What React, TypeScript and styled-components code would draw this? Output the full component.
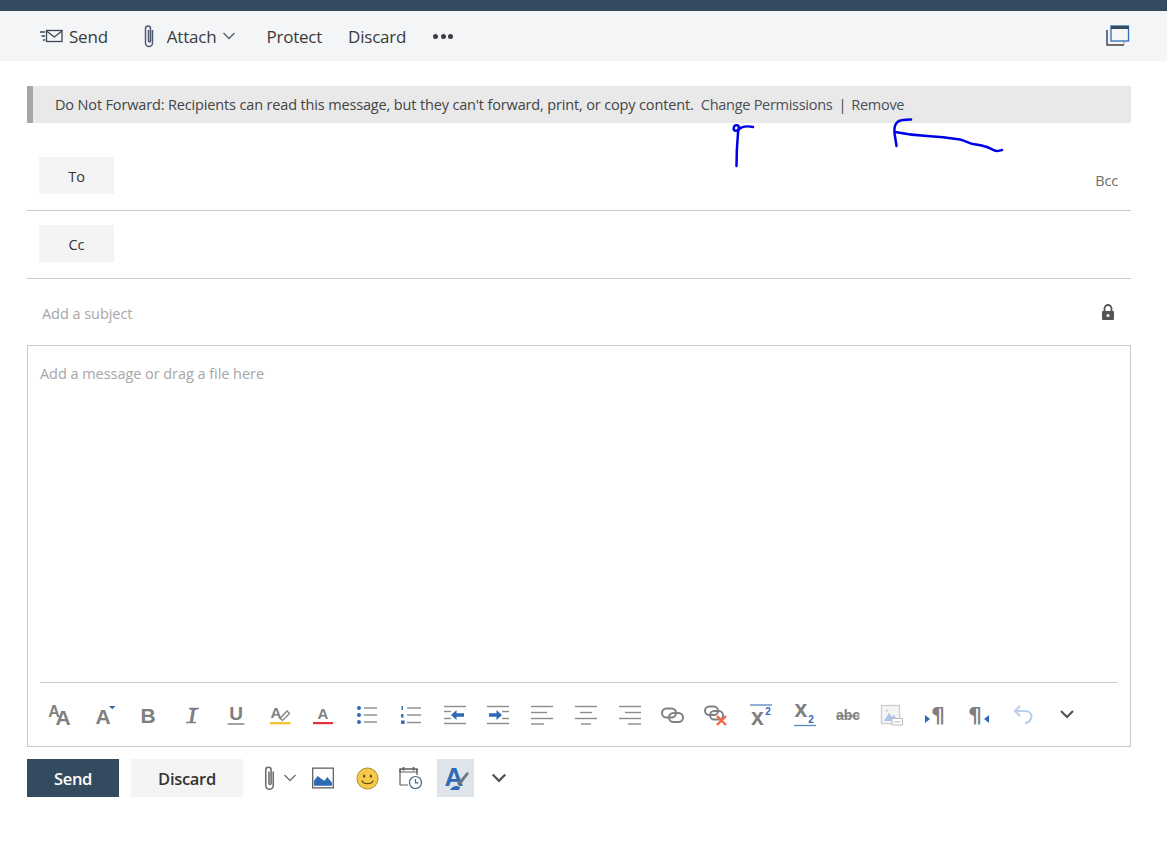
import * as React from "react";
import styled, { createGlobalStyle } from "styled-components";

const GlobalStyle = createGlobalStyle`
  html, body { margin: 0; padding: 0; background: #fff; }
  body { font-family: "Open Sans", "Noto Sans", "Liberation Sans", sans-serif; color: #333; }
`;

const Page = styled.div`
  position: relative;
  width: 1167px;
  height: 849px;
  overflow: hidden;
  display: flex;
  flex-direction: column;
`;

const TopStrip = styled.div`
  height: 11px;
  background: #344a5f;
  flex: none;
`;

const CommandBar = styled.div`
  height: 50px;
  flex: none;
  background: #f4f5f7;
  display: flex;
  align-items: center;
  padding: 0 37px 0 39px;
  color: #3a3a3a;
  font-size: 17px;
`;

const CommandItem = styled.div<{ $gap?: number; $after?: number; $before?: number }>`
  display: flex;
  align-items: center;
  gap: ${(p) => p.$gap ?? 0}px;
  margin-left: ${(p) => p.$before ?? 0}px;
  margin-right: ${(p) => p.$after ?? 0}px;
  letter-spacing: -0.22px;
`;

const Dots = styled.div`
  display: flex;
  gap: 2.6px;
  margin-left: 1px;
  i {
    width: 5px;
    height: 5px;
    border-radius: 50%;
    background: #3c3c46;
  }
`;

const Spacer = styled.div`
  flex: 1;
`;

const Content = styled.div`
  padding: 25px 36px 0 27px;
  display: flex;
  flex-direction: column;
`;

const Notice = styled.div`
  height: 37px;
  box-sizing: border-box;
  background: #e9e9e9;
  border-left: 6px solid #a6a6a6;
  padding-left: 22px;
  display: flex;
  align-items: center;
  font-size: 14.5px;
  letter-spacing: -0.15px;
  color: #444;
  white-space: pre;
`;

const NoticeLink = styled.span`
  color: #4a4f57;
  letter-spacing: -0.28px;
`;

const NoticeDivider = styled.span`
  margin: 0 5px 0 6px;
  color: #444;
`;

const RecipientRow = styled.div<{ $height: number; $top: number }>`
  height: ${(p) => p.$height}px;
  box-sizing: border-box;
  border-bottom: 1px solid #c8c8c8;
  padding: ${(p) => p.$top}px 0 0 12px;
  display: flex;
  align-items: flex-start;
  justify-content: space-between;
`;

const RecipientButton = styled.div`
  width: 75px;
  height: 37px;
  box-sizing: border-box;
  padding-top: 1px;
  background: #f4f4f4;
  color: #333;
  font-size: 14.5px;
  display: flex;
  align-items: center;
  justify-content: center;
`;

const BccLabel = styled.div`
  font-size: 14.5px;
  color: #6d6d6d;
  margin: 14px 13px 0 0;
  letter-spacing: -0.2px;
`;

const SubjectRow = styled.div`
  height: 66px;
  box-sizing: border-box;
  display: flex;
  align-items: center;
  justify-content: space-between;
  padding: 3px 15px 0 15px;
  font-size: 14.5px;
  color: #a6a6a6;
  letter-spacing: -0.05px;
  svg {
    margin-bottom: 3px;
  }
`;

const Editor = styled.div`
  height: 402px;
  box-sizing: border-box;
  border: 1px solid #c8c8c8;
  padding: 0 13px 0 12px;
  display: flex;
  flex-direction: column;
`;

const Placeholder = styled.div`
  flex: 1;
  padding-top: 18px;
  font-size: 14.5px;
  color: #a6a6a6;
  letter-spacing: -0.05px;
`;

const FormatBar = styled.div`
  height: 64px;
  flex: none;
  box-sizing: border-box;
  border-top: 1px solid #c8c8c8;
  display: grid;
  grid-template-columns: repeat(24, 43.75px);
  align-items: center;
`;

const FormatCell = styled.div`
  display: flex;
  justify-content: center;
  align-items: center;
  height: 63px;
  margin-left: -2px;
  svg {
    display: block;
    overflow: visible;
  }
`;

const Footer = styled.div`
  display: flex;
  align-items: center;
  margin-top: 12px;
  height: 38px;
`;

const PrimaryButton = styled.div`
  width: 92px;
  height: 38px;
  box-sizing: border-box;
  padding-top: 1px;
  background: #344a5f;
  color: #fff;
  font-weight: 600;
  font-size: 16.5px;
  letter-spacing: -0.3px;
  display: flex;
  align-items: center;
  justify-content: center;
  margin-right: 12px;
`;

const SecondaryButton = styled.div`
  width: 112px;
  height: 38px;
  box-sizing: border-box;
  padding-top: 1px;
  background: #f4f4f4;
  color: #333;
  font-weight: 600;
  font-size: 16.5px;
  letter-spacing: -0.3px;
  display: flex;
  align-items: center;
  justify-content: center;
  margin-right: 17px;
`;

const FooterIcon = styled.div<{ $width: number; $active?: boolean }>`
  width: ${(p) => p.$width}px;
  margin-left: ${(p) => (p.$active ? 5 : 0)}px;
  height: 38px;
  display: flex;
  align-items: center;
  justify-content: center;
  background: ${(p) => (p.$active ? "#dfe3ea" : "transparent")};
  svg {
    overflow: visible;
  }
`;

const Scribble = styled.svg`
  position: absolute;
  left: 0;
  top: 0;
  pointer-events: none;
`;

const grey = "#7f7f7f";
const blue = "#2f6ab5";
const FONT = '"Liberation Sans", sans-serif';

type GlyphProps = { size: number; x: number; y: number; weight?: string; style?: string; fill?: string; family?: string; children: string };
const Glyph = ({ size, x, y, weight = "normal", style = "normal", fill = grey, family = FONT, children }: GlyphProps) => (
  <text x={x} y={y} fontSize={size} fontWeight={weight} fontStyle={style} fill={fill} fontFamily={family} textAnchor="middle">
    {children}
  </text>
);

const Icon = ({ children }: { children: React.ReactNode }) => (
  <svg width="26" height="26" viewBox="0 0 26 26">
    {children}
  </svg>
);

const Lines = ({ rows }: { rows: [number, number, number][] }) => (
  <g stroke="#8c8c8c" strokeWidth="1.4">
    {rows.map(([x1, x2, y], i) => (
      <line key={i} x1={x1} x2={x2} y1={y} y2={y} />
    ))}
  </g>
);

const formatIcons: React.ReactNode[] = [
  <Icon><Glyph size={16} x={6} y={15} weight="bold">A</Glyph><Glyph size={21} x={15} y={23} weight="bold">A</Glyph></Icon>,
  <Icon><Glyph size={21} x={11} y={22} weight="bold">A</Glyph><path d="M17 4h6.500l-3.200 3.200z" fill={blue} /></Icon>,
  <Icon><Glyph size={21} x={13} y={21} weight="bold">B</Glyph></Icon>,
  <Icon><Glyph size={21} x={13} y={21} style="italic" family='"Liberation Serif", serif' weight="bold">I</Glyph><path d="M7 20.500h10M10 6.500h10" stroke={grey} strokeWidth="1.400" /></Icon>,
  <Icon><Glyph size={19} x={13} y={18} weight="bold">U</Glyph><path d="M4.500 22h17" stroke={grey} strokeWidth="1.400" /></Icon>,
  <Icon><Glyph size={15} x={9} y={16} weight="bold">A</Glyph><path d="M13 16.500l7-7.500 2.500 2.500-7 7z" fill="none" stroke={grey} strokeWidth="1.300" /><rect x="3" y="20" width="20.500" height="2.400" fill="#f5c33b" /></Icon>,
  <Icon><Glyph size={15} x={13} y={17} weight="bold">A</Glyph><rect x="3" y="20" width="20" height="2.200" fill="#e8313a" /></Icon>,
  <Icon><g fill={blue}><circle cx="5" cy="6" r="2" /><circle cx="5" cy="13" r="2" /><circle cx="5" cy="20" r="2" /></g><Lines rows={[[10, 23, 6], [10, 23, 13], [10, 23, 20]]} /></Icon>,
  <Icon><g fill={blue}><rect x="3.500" y="4" width="1.400" height="4" /><path d="M3 12h2.400v1.400l-1 1h1.600v1.200H3z" /><rect x="3" y="18.500" width="3.600" height="3.400" /></g><Lines rows={[[9, 23, 6], [9, 23, 13], [9, 23, 20.500]]} /></Icon>,
  <Icon><Lines rows={[[2, 24, 4.500], [2, 9, 9.500], [2, 9, 16.500], [2, 24, 21.500]]} /><path d="M9 13l5.500-5v3.200H22v3.600h-7.500V18z" fill={blue} /></Icon>,
  <Icon><Lines rows={[[2, 24, 4.500], [17, 24, 9.500], [17, 24, 16.500], [2, 24, 21.500]]} /><path d="M17 13l-5.500-5v3.200H4v3.600h7.500V18z" fill={blue} /></Icon>,
  <Icon><Lines rows={[[2, 24, 4.500], [2, 18, 10.500], [2, 24, 16.500], [2, 15, 22]]} /></Icon>,
  <Icon><Lines rows={[[2, 24, 4.500], [7, 19, 10.500], [2, 24, 16.500], [8, 18, 22]]} /></Icon>,
  <Icon><Lines rows={[[2, 24, 4.500], [8, 24, 10.500], [2, 24, 16.500], [11, 24, 22]]} /></Icon>,
  <Icon><g fill="none" stroke="#808080" strokeWidth="2"><rect x="2" y="6.500" width="14" height="9" rx="4.500" /><rect x="9" y="11" width="14" height="9" rx="4.500" /></g></Icon>,
  <Icon><g fill="none" stroke="#808080" strokeWidth="2"><rect x="1" y="4.500" width="13" height="8.500" rx="4.200" /><rect x="6" y="9" width="13" height="8.500" rx="4.200" /></g><path d="M13 14l9 9M22 14l-9 9" stroke="#ef6a43" strokeWidth="2.400" /></Icon>,
  <Icon><path d="M2 3h22" stroke={blue} strokeWidth="1.300" opacity=".8" /><Glyph size={23} x={9.500} y={23} weight="bold">x</Glyph><Glyph size={10} x={20} y={13} weight="bold" fill={blue}>2</Glyph></Icon>,
  <Icon><Glyph size={23} x={9} y={15} weight="bold">x</Glyph><Glyph size={10} x={19} y={21} weight="bold" fill={blue}>2</Glyph><path d="M2 23.500h22" stroke={blue} strokeWidth="1.300" opacity=".8" /></Icon>,
  <Icon><Glyph size={14} x={13} y={18} weight="bold">abc</Glyph><path d="M1.500 14h23" stroke={grey} strokeWidth="1.300" /></Icon>,
  <Icon><rect x="2.500" y="3.500" width="18" height="18" fill="#f4f4f4" stroke="#cfcfcf" strokeWidth="1.400" /><path d="M5 19l5-8 3 4 2-2 4 6z" fill="#a9c4e6" /><circle cx="8" cy="8.500" r="1.600" fill="#cfdff2" /><rect x="13" y="16.500" width="10.500" height="6.500" fill="#fff" stroke="#bdbdbd" /><path d="M15 20h6.500" stroke="#bdbdbd" /></Icon>,
  <Icon><path d="M2 13l5 4-5 4z" fill={blue} /><Glyph size={22} x={15} y={21} weight="bold" family='"DejaVu Sans", sans-serif'>¶</Glyph></Icon>,
  <Icon><Glyph size={22} x={8} y={21} weight="bold" family='"DejaVu Sans", sans-serif'>¶</Glyph><path d="M22 13l-5 4 5 4z" fill={blue} /></Icon>,
  <Icon><path d="M10 4L5 9l5 5M5 9h10c4.500 0 6.500 3 6.500 5.500S19 21 15 21" fill="none" stroke="#b9cfeb" strokeWidth="2.200" /></Icon>,
  <Icon><path d="M7 9l6 6 6-6" fill="none" stroke="#54504c" strokeWidth="2" /></Icon>,
];

const PaperClip = ({ color, w, h, stroke = 1.3 }: { color: string; w: number; h: number; stroke?: number }) => (
  <svg width={w} height={h} viewBox="0 0 14 24">
    <path d="M10.500 6v13a3.500 3.500 0 0 1-7 0V4.500a2.500 2.500 0 0 1 5 0V17a1 1 0 0 1-2 0V6" fill="none" stroke={color} strokeWidth={stroke} />
  </svg>
);

const Chevron = ({ size, color, width }: { size: number; color: string; width: number }) => (
  <svg width={size} height={size} viewBox="0 0 14 14">
    <path d="M1.500 4l5.500 5.500L12.500 4" fill="none" stroke={color} strokeWidth={width} />
  </svg>
);

const App = () => (
  <Page>
    <GlobalStyle />
    <TopStrip />
    <CommandBar>
      <CommandItem $gap={3} $after={34}>
        <svg width="27" height="15" viewBox="0 0 27 15">
          <path d="M1 3h5M2.500 7h3.500M4 11h2" stroke="#3c4650" strokeWidth="1.300" />
          <rect x="7.500" y="1.500" width="15.500" height="11" fill="none" stroke="#3c4650" strokeWidth="1.300" />
          <path d="M7.500 2l7.800 6 7.700-6" fill="none" stroke="#3c4650" strokeWidth="1.300" />
        </svg>
        Send
      </CommandItem>
      <CommandItem $gap={11}>
        <PaperClip color="#4f5d73" w={14} h={24} stroke={1.5} />
        Attach
      </CommandItem>
      <CommandItem $before={6} $after={30}>
        <Chevron size={14} color="#5a6570" width={1.5} />
      </CommandItem>
      <CommandItem $after={26}>Protect</CommandItem>
      <CommandItem $after={26}>Discard</CommandItem>
      <Dots><i /><i /><i /></Dots>
      <Spacer />
      <svg width="24" height="22" viewBox="0 0 24 22">
        <path d="M1 5v15h17" fill="none" stroke="#344a5f" strokeWidth="1.500" />
        <path d="M1 19.500h17V17" fill="none" stroke="#8a5a3c" strokeWidth=".7" />
        <rect x="5" y="1" width="17.500" height="15" fill="none" stroke="#2f6ab5" strokeWidth="1.300" />
        <rect x="5" y="1" width="17.500" height="3" fill="#344a5f" />
      </svg>
    </CommandBar>
    <Content>
      <Notice>
        Do Not Forward: Recipients can read this message, but they can't forward, print, or copy content.{"  "}
        <NoticeLink>Change Permissions</NoticeLink>
        <NoticeDivider>|</NoticeDivider>
        <NoticeLink>Remove</NoticeLink>
      </Notice>
      <RecipientRow $height={88} $top={34}>
        <RecipientButton>To</RecipientButton>
        <BccLabel>Bcc</BccLabel>
      </RecipientRow>
      <RecipientRow $height={68} $top={14}>
        <RecipientButton>Cc</RecipientButton>
      </RecipientRow>
      <SubjectRow>
        Add a subject
        <svg width="16" height="18" viewBox="0 0 16 18">
          <path d="M4.500 8V5.500a3.500 3.500 0 0 1 7 0V8" fill="none" stroke="#555" strokeWidth="1.800" />
          <rect x="2" y="8" width="12" height="9" rx="1" fill="#555" />
          <circle cx="8" cy="12.500" r="1.500" fill="#fff" />
        </svg>
      </SubjectRow>
      <Editor>
        <Placeholder>Add a message or drag a file here</Placeholder>
        <FormatBar>
          {formatIcons.map((icon, i) => (
            <FormatCell key={i}>{icon}</FormatCell>
          ))}
        </FormatBar>
      </Editor>
      <Footer>
        <PrimaryButton>Send</PrimaryButton>
        <SecondaryButton>Discard</SecondaryButton>
        <FooterIcon $width={18}>
          <PaperClip color="#6f6f6f" w={15} h={26} stroke={1.5} />
        </FooterIcon>
        <FooterIcon $width={24}>
          <Chevron size={14} color="#6f6f6f" width={1.3} />
        </FooterIcon>
        <FooterIcon $width={42}>
          <svg width="22" height="22" viewBox="0 0 23 22">
            <rect x=".7" y=".7" width="21.600" height="20.600" fill="#fff" stroke="#666" strokeWidth="1.400" />
            <path d="M2 19V14l4-5 4 3 3 2 3-4 5 6v3z" fill="#2f6ab5" />
          </svg>
        </FooterIcon>
        <FooterIcon $width={46}>
          <svg width="23" height="23" viewBox="0 0 24 24">
            <circle cx="12" cy="12" r="11" fill="#f7c948" stroke="#a8892b" strokeWidth="1" />
            <ellipse cx="8.500" cy="9.500" rx="1.200" ry="1.700" fill="#5a4a1a" />
            <ellipse cx="15.500" cy="9.500" rx="1.200" ry="1.700" fill="#5a4a1a" />
            <path d="M6 14c2 4.500 10 4.500 12 0" fill="none" stroke="#5a4a1a" strokeWidth="1.200" />
          </svg>
        </FooterIcon>
        <FooterIcon $width={42}>
          <svg width="24" height="24" viewBox="0 0 24 24">
            <path d="M1 15V3h17v6" fill="none" stroke="#5c5c5c" strokeWidth="1.200" />
            <path d="M1 3h17v3H1zM1 19h8" fill="none" stroke="#5c5c5c" strokeWidth="1.200" />
            <path d="M1 15v4" stroke="#5c5c5c" strokeWidth="1.200" />
            <path d="M4.500 1v3.500M14.500 1v3.500" stroke="#5c5c5c" strokeWidth="1.600" />
            <circle cx="16.500" cy="16.500" r="6" fill="#fff" stroke="#4d6680" strokeWidth="1.200" />
            <path d="M16.500 13v3.800h3" fill="none" stroke="#4d6680" strokeWidth="1.200" />
          </svg>
        </FooterIcon>
        <FooterIcon $width={37} $active>
          <svg width="28" height="28" viewBox="0 0 28 28">
            <text x="12" y="22" fontSize="26" fontWeight="bold" fill="#2f6ab5" fontFamily={FONT} textAnchor="middle">A</text>
            <path d="M15 20L25 8l2 1.500-9 12z" fill="#6b7480" />
            <path d="M8 26c2-4 7-5 10-3l-1 3z" fill="#2f6ab5" />
          </svg>
        </FooterIcon>
        <FooterIcon $width={50}>
          <Chevron size={16} color="#54504c" width={1.9} />
        </FooterIcon>
      </Footer>
    </Content>
    <Scribble width="1167" height="849" viewBox="0 0 1167 849">
      <g fill="none" stroke="#0000e6" strokeWidth="2.500" strokeLinecap="round" strokeLinejoin="round">
        <path d="M736.500 166c0-10 .5-22 1.500-33 .3-3 1.500-5 .5-7-1-1.500-4.500-1-4.800 2-.3 3 2.800 3.500 4.300 2 3-3 9-4.500 15-3" />
        <path d="M896.500 146c-.5-4-1.500-9-2-13-.3-4 .5-9 3-11 2-2 7-2.500 13.500-2.500" />
        <path d="M895 132c10 2 22 3.500 32 4 12 .5 24 2 33 3.500 5 1 9 4 13 4.500 5 .5 10 1.500 14 3 4 1.500 7 4 10 4 2 0 3-.5 5-1" />
      </g>
    </Scribble>
  </Page>
);

export default App;
